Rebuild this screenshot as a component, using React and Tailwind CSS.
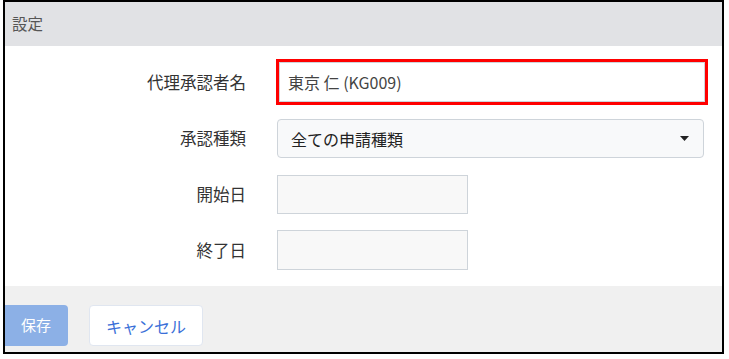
import { useState } from 'react';

export default function App() {
    const [approver] = useState('東京 仁 (KG009)');

    // ラベル列の共通スタイル
    const label = 'w-[243px] shrink-0 text-right pr-[2px] text-[16.5px] text-[#333]';

    return (
        <div className="w-[729px] h-[359px] bg-white" style={{ fontFamily: '"Noto Sans CJK JP", "Noto Sans", sans-serif' }}>
            <div className="ml-[3px] w-[721px] h-[354px] border-2 border-black flex flex-col overflow-hidden">
                {/* ヘッダー */}
                <div className="h-[44px] shrink-0 bg-[#e1e2e5] flex items-center px-[7px] text-[15.5px] text-[#555]">
                    設定
                </div>

                {/* フォーム */}
                <div className="flex-1 bg-white pt-[13px] flex flex-col">
                    <div className="flex items-center h-[46px]">
                        <div className={label}>代理承認者名</div>
                        <div className="ml-[28px] w-[432px] h-[46px] border-[3px] border-[#ff0000] p-0">
                            <div className="w-full h-full border border-[#ced4da] bg-white flex items-center px-[8px] text-[16px] text-[#444]">
                                {approver}
                            </div>
                        </div>
                    </div>

                    <div className="flex items-center h-[39px] mt-[14px]">
                        <div className={label}>承認種類</div>
                        <div className="ml-[29px] w-[427px] h-[39px] border border-[#ced4da] rounded-[4px] bg-[#f8f9fa] flex items-center justify-between pl-[13px] pr-[14px] text-[16px] text-[#222]">
                            <span>全ての申請種類</span>
                            <svg width="9" height="5" viewBox="0 0 9 5">
                                <path d="M0 0 L9 0 L4.5 5 Z" fill="#222" />
                            </svg>
                        </div>
                    </div>

                    <div className="flex items-center h-[39px] mt-[17px]">
                        <div className={label}>開始日</div>
                        <div className="ml-[29px] w-[191px] h-[39px] border border-[#ced4da] bg-[#f8f8f8]"></div>
                    </div>

                    <div className="flex items-center h-[40px] mt-[16px]">
                        <div className={label}>終了日</div>
                        <div className="ml-[29px] w-[191px] h-[40px] border border-[#ced4da] bg-[#f8f8f8]"></div>
                    </div>
                </div>

                {/* フッター */}
                <div className="h-[66px] shrink-0 bg-[#f0f0f0] flex items-start pt-[19px] gap-[21px]">
                    <button className="w-[64px] h-[41px] rounded-r-[4px] bg-[#8cb0e6] text-white text-[15px] -ml-[1px]">
                        保存
                    </button>
                    <button className="w-[114px] h-[41px] rounded-[4px] bg-white border border-[#e0e6f0] text-[#3a6fd8] text-[16px]">
                        キャンセル
                    </button>
                </div>
            </div>
        </div>
    );
}
